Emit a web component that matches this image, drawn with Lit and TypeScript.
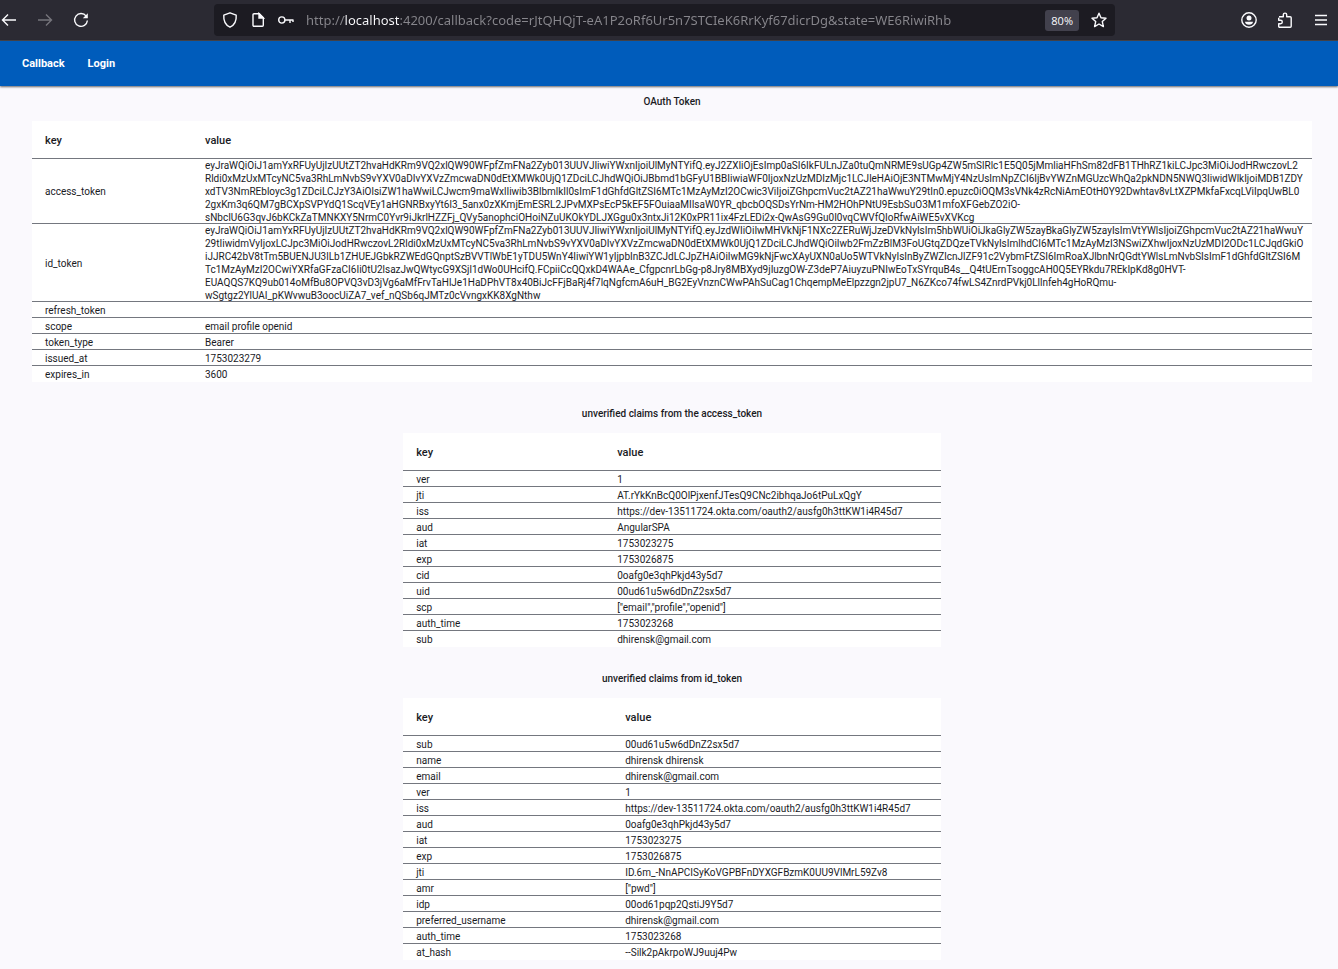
import { LitElement, html, css, svg } from "lit";
import { customElement, property } from "lit/decorators.js";

type Row = [string, string[]];

const accessToken = [
  "eyJraWQiOiJ1amYxRFUyUjIzUUtZT2hvaHdKRm9VQ2xlQW90WFpfZmFNa2Zyb013UUVJIiwiYWxnIjoiUlMyNTYifQ.eyJ2ZXIiOjEsImp0aSI6IkFULnJZa0tuQmNRME9sUGp4ZW5mSlRlc1E5Q05jMmliaHFhSm82dFB1THhRZ1kiLCJpc3MiOiJodHRwczovL2",
  "Rldi0xMzUxMTcyNC5va3RhLmNvbS9vYXV0aDIvYXVzZmcwaDN0dEtXMWk0UjQ1ZDciLCJhdWQiOiJBbmd1bGFyU1BBIiwiaWF0IjoxNzUzMDIzMjc1LCJleHAiOjE3NTMwMjY4NzUsImNpZCI6IjBvYWZnMGUzcWhQa2pkNDN5NWQ3IiwidWlkIjoiMDB1ZDY",
  "xdTV3NmREbloyc3g1ZDciLCJzY3AiOlsiZW1haWwiLCJwcm9maWxlIiwib3BlbmlkIl0sImF1dGhfdGltZSI6MTc1MzAyMzI2OCwic3ViIjoiZGhpcmVuc2tAZ21haWwuY29tIn0.epuzc0iOQM3sVNk4zRcNiAmEOtH0Y92Dwhtav8vLtXZPMkfaFxcqLViIpqUwBL0",
  "2gxKm3q6QM7gBCXpSVPYdQ1ScqVEy1aHGNRBxyYt6l3_5anx0zXKmjEmESRL2JPvMXPsEcP5kEF5FOuiaaMIIsaW0YR_qbcbOQSDsYrNm-HM2HOhPNtU9EsbSuO3M1mfoXFGebZO2iO-",
  "sNbcIU6G3qvJ6bKCkZaTMNKXY5NrmC0Yvr9iJkrlHZZFj_QVy5anophciOHoiNZuUKOkYDLJXGgu0x3ntxJi12K0xPR11ix4FzLEDi2x-QwAsG9Gu0I0vqCWVfQIoRfwAiWE5vXVKcg",
];

const idToken = [
  "eyJraWQiOiJ1amYxRFUyUjIzUUtZT2hvaHdKRm9VQ2xlQW90WFpfZmFNa2Zyb013UUVJIiwiYWxnIjoiUlMyNTYifQ.eyJzdWIiOiIwMHVkNjF1NXc2ZERuWjJzeDVkNyIsIm5hbWUiOiJkaGlyZW5zayBkaGlyZW5zayIsImVtYWlsIjoiZGhpcmVuc2tAZ21haWwuY",
  "29tIiwidmVyIjoxLCJpc3MiOiJodHRwczovL2Rldi0xMzUxMTcyNC5va3RhLmNvbS9vYXV0aDIvYXVzZmcwaDN0dEtXMWk0UjQ1ZDciLCJhdWQiOiIwb2FmZzBlM3FoUGtqZDQzeTVkNyIsImlhdCI6MTc1MzAyMzI3NSwiZXhwIjoxNzUzMDI2ODc1LCJqdGkiO",
  "iJJRC42bV8tTm5BUENJU3lLb1ZHUEJGbkRZWEdGQnptSzBVVTlWbE1yTDU5WnY4IiwiYW1yIjpbInB3ZCJdLCJpZHAiOiIwMG9kNjFwcXAyUXN0aUo5WTVkNyIsInByZWZlcnJlZF91c2VybmFtZSI6ImRoaXJlbnNrQGdtYWlsLmNvbSIsImF1dGhfdGltZSI6M",
  "Tc1MzAyMzI2OCwiYXRfaGFzaCI6Ii0tU2lsazJwQWtycG9XSjl1dWo0UHcifQ.FCpiiCcQQxkD4WAAe_CfgpcnrLbGg-p8Jry8MBXyd9jIuzgOW-Z3deP7AiuyzuPNIwEoTxSYrquB4s__Q4tUErnTsoggcAH0Q5EYRkdu7REkIpKd8g0HVT-",
  "EUAQQS7KQ9ub014oMfBu8OPVQ3vD3jVg6aMfFrvTaHlJe1HaDPhVT8x40BiJcFFjBaRj4f7lqNgfcmA6uH_BG2EyVnznCWwPAhSuCag1ChqempMeElpzzgn2jpU7_N6ZKco74fwLS4ZnrdPVkj0Lllnfeh4gHoRQmu-",
  "wSgtgz2YlUAI_pKWvwuB3oocUiZA7_vef_nQSb6qJMTz0cVvngxKK8XgNthw",
];

const tokenRows: Row[] = [
  ["access_token", accessToken],
  ["id_token", idToken],
  ["refresh_token", [""]],
  ["scope", ["email profile openid"]],
  ["token_type", ["Bearer"]],
  ["issued_at", ["1753023279"]],
  ["expires_in", ["3600"]],
];

const accessClaims: Row[] = [
  ["ver", ["1"]],
  ["jti", ["AT.rYkKnBcQ0OlPjxenfJTesQ9CNc2ibhqaJo6tPuLxQgY"]],
  ["iss", ["https://dev-13511724.okta.com/oauth2/ausfg0h3ttKW1i4R45d7"]],
  ["aud", ["AngularSPA"]],
  ["iat", ["1753023275"]],
  ["exp", ["1753026875"]],
  ["cid", ["0oafg0e3qhPkjd43y5d7"]],
  ["uid", ["00ud61u5w6dDnZ2sx5d7"]],
  ["scp", ['["email","profile","openid"]']],
  ["auth_time", ["1753023268"]],
  ["sub", ["dhirensk@gmail.com"]],
];

const idClaims: Row[] = [
  ["sub", ["00ud61u5w6dDnZ2sx5d7"]],
  ["name", ["dhirensk dhirensk"]],
  ["email", ["dhirensk@gmail.com"]],
  ["ver", ["1"]],
  ["iss", ["https://dev-13511724.okta.com/oauth2/ausfg0h3ttKW1i4R45d7"]],
  ["aud", ["0oafg0e3qhPkjd43y5d7"]],
  ["iat", ["1753023275"]],
  ["exp", ["1753026875"]],
  ["jti", ["ID.6m_-NnAPCISyKoVGPBFnDYXGFBzmK0UU9VlMrL59Zv8"]],
  ["amr", ['["pwd"]']],
  ["idp", ["00od61pqp2QstiJ9Y5d7"]],
  ["preferred_username", ["dhirensk@gmail.com"]],
  ["auth_time", ["1753023268"]],
  ["at_hash", ["--Silk2pAkrpoWJ9uuj4Pw"]],
];

const icons = {
  back: svg`<path d="M15 8H1.5M7 2.5L1.5 8L7 13.5"/>`,
  forward: svg`<path d="M1 8h13.5M9 2.5L14.5 8L9 13.5"/>`,
  reload: svg`<path d="M13.2 4.2A6.4 6.4 0 1 0 14.4 8.5"/><path d="M14.8 1.2V6.2H9.8Z" fill="currentColor" stroke="none"/>`,
  shield: svg`<path d="M8 .8L14.2 3.2C14.6 8.5 12.5 13 8 15.2C3.5 13 1.4 8.5 1.8 3.2Z" stroke-linejoin="round"/>`,
  page: svg`<path d="M4 1.7H9.2L13.3 5.800V13.3A1 1 0 0 1 12.3 14.3H4A1 1 0 0 1 3 13.3V2.7A1 1 0 0 1 4 1.7Z"/><path d="M9 1.5V6H13.5Z" fill="currentColor"/>`,
  key: svg`<circle cx="3.8" cy="8" r="3.1"/><path d="M7 8H15.5M12 8V11M15 8V10"/>`,
  star: svg`<path d="M8 1.2L10 5.7L15 6.2L11.3 9.6L12.4 14.6L8 12L3.6 14.6L4.7 9.6L1 6.2L6 5.7Z" stroke-linejoin="round"/>`,
  account: svg`<circle cx="8" cy="8" r="7.2"/><circle cx="8" cy="6" r="2.5" fill="currentColor" stroke="none"/><path d="M4 9.8H12C12 11.6 10.2 12.8 8 12.8S4 11.6 4 9.8Z" fill="currentColor" stroke="none"/>`,
  extension: svg`<path d="M2 4.7H6.3V2.8A1.7 1.7 0 0 1 9.7 2.8V4.7H13.2A1 1 0 0 1 14.2 5.7V14.3A1 1 0 0 1 13.2 15.3H2.7A1 1 0 0 1 1.7 14.3V11.7H3.6A1.7 1.7 0 0 0 3.6 8.3H1.7V5.7" stroke-linejoin="round"/>`,
  menu: svg`<path d="M2 3.500H14M2 8H14M2 12.500H14"/>`,
};

@customElement("browser-bar")
class BrowserBar extends LitElement {
  static styles = css`
    :host {
      display: flex;
      align-items: center;
      height: 41px;
      box-sizing: border-box;
      border-bottom: 1px solid #45444b;
      background: #2b2a33;
      color: #fbfbfe;
      font-family: "Open Sans", sans-serif;
    }
    button {
      display: flex;
      padding: 0;
      border: 0;
      background: none;
      color: inherit;
      font: inherit;
    }
    button:disabled {
      color: #76757c;
    }
    svg {
      display: block;
      width: 16px;
      height: 16px;
      fill: none;
      stroke: currentColor;
      stroke-width: 1.4;
    }
    .history {
      display: flex;
      gap: 20px;
      flex: 0 0 213px;
      padding-left: 1px;
    }
    .tools {
      display: flex;
      gap: 20px;
      flex: 0 0 223px;
      box-sizing: border-box;
      justify-content: flex-end;
      padding-right: 9px;
    }
    .address {
      display: flex;
      align-items: center;
      gap: 12px;
      flex: 1;
      height: 32px;
      box-sizing: border-box;
      padding: 0 8px;
      border-radius: 4px;
      background: #1c1b22;
    }
    .url {
      flex: 1;
      min-width: 0;
      height: 24px;
      padding: 0;
      border: 0;
      outline: 0;
      font: 13px/24px "Noto Sans", sans-serif;
      color: transparent;
      background: linear-gradient(90deg, #87868c 38px, #fbfbfe 38px, #fbfbfe 93px, #87868c 93px);
      -webkit-background-clip: text;
      background-clip: text;
    }
    .zoom {
      padding: 0 6px;
      border-radius: 3px;
      background: #42414d;
      font-size: 11px;
      line-height: 21px;
    }
  `;

  private icon(name: keyof typeof icons) {
    return html`<svg viewBox="0 0 16 16" aria-hidden="true">${icons[name]}</svg>`;
  }

  render() {
    return html`
      <div class="history">
        <button aria-label="Back">${this.icon("back")}</button>
        <button aria-label="Forward" disabled>${this.icon("forward")}</button>
        <button aria-label="Reload">${this.icon("reload")}</button>
      </div>
      <div class="address">
        <button aria-label="Tracking protection">${this.icon("shield")}</button>
        <button aria-label="Site information">${this.icon("page")}</button>
        <button aria-label="Saved logins">${this.icon("key")}</button>
        <input
          class="url"
          aria-label="Address"
          spellcheck="false"
          value="http://localhost:4200/callback?code=rJtQHQjT-eA1P2oRf6Ur5n7STCIeK6RrKyf67dicrDg&state=WE6RiwiRhb"
        />
        <button class="zoom">80%</button>
        <button aria-label="Bookmark">${this.icon("star")}</button>
      </div>
      <div class="tools">
        <button aria-label="Account">${this.icon("account")}</button>
        <button aria-label="Extensions">${this.icon("extension")}</button>
        <button aria-label="Menu">${this.icon("menu")}</button>
      </div>
    `;
  }
}

@customElement("claims-table")
class ClaimsTable extends LitElement {
  @property({ attribute: false }) rows: Row[] = [];
  @property() heading = "";
  @property({ reflect: true }) kind: "token" | "access" | "id" = "token";

  static styles = css`
    :host {
      display: block;
      width: 42%;
    }
    :host([kind="token"]) {
      width: 100%;
    }
    .title {
      margin: 0 0 12px;
      font-size: 10px;
      line-height: 15px;
      font-weight: 500;
      text-align: center;
    }
    table {
      width: 100%;
      border-spacing: 0;
      background: #fff;
      font-size: 10px;
      line-height: 13px;
    }
    th,
    td {
      height: 16px;
      box-sizing: border-box;
      padding: 0 0 0 13px;
      text-align: left;
      vertical-align: middle;
      box-shadow: inset 0 -1px #74777f;
      overflow-wrap: anywhere;
    }
    thead th {
      height: 38px;
      font-size: 11px;
      font-weight: 500;
    }
    tbody th {
      font-weight: 400;
      white-space: nowrap;
    }
    tbody tr:last-child > * {
      box-shadow: none;
    }
    .key {
      width: 160px;
    }
    :host([kind="access"]) .key {
      width: 201px;
    }
    :host([kind="id"]) .key {
      width: 209px;
    }
  `;

  render() {
    return html`
      <h2 class="title" id="title">${this.heading}</h2>
      <table aria-labelledby="title">
        <thead>
          <tr><th scope="col" class="key">key</th><th scope="col">value</th></tr>
        </thead>
        <tbody>
          ${this.rows.map(
            ([key, lines]) => html`<tr>
              <th scope="row">${key}</th>
              <td>${lines.map((line, i) => (i ? html`<br />${line}` : line))}</td>
            </tr>`
          )}
        </tbody>
      </table>
    `;
  }
}

@customElement("app-root")
class AppRoot extends LitElement {
  static styles = css`
    :host {
      display: block;
      min-height: 100vh;
      background: #faf9fd;
      color: #1a1b1f;
      font-family: Roboto, sans-serif;
    }
    .nav {
      display: flex;
      align-items: center;
      gap: 23px;
      height: 45px;
      padding: 0 22px;
      background: #005cbb;
      box-shadow: 0 1px 2px rgba(0, 0, 0, 0.6);
    }
    .nav a {
      color: #fff;
      font-size: 11px;
      font-weight: 700;
      text-decoration: none;
    }
    .content {
      display: flex;
      flex-direction: column;
      align-items: center;
      gap: 24px;
      padding: 8px 26px 6px 32px;
    }
  `;

  render() {
    return html`
      <browser-bar></browser-bar>
      <nav class="nav">
        <a href="#callback">Callback</a>
        <a href="#login">Login</a>
      </nav>
      <main class="content">
        <claims-table kind="token" heading="OAuth Token" .rows=${tokenRows}></claims-table>
        <claims-table kind="access" heading="unverified claims from the access_token" .rows=${accessClaims}></claims-table>
        <claims-table kind="id" heading="unverified claims from id_token" .rows=${idClaims}></claims-table>
      </main>
    `;
  }
}
